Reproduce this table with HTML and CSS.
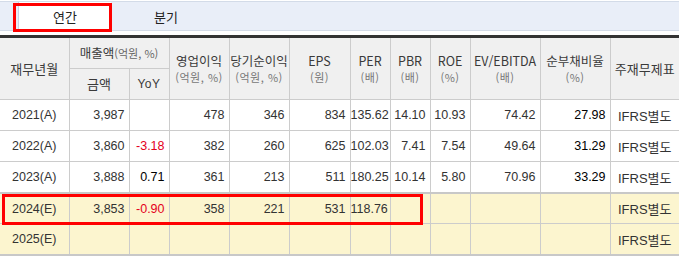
FILE: index.html
```html
<!DOCTYPE html>
<html lang="ko">
<head>
<meta charset="utf-8">
<link rel="stylesheet" href="styles.css">
</head>
<body>
<div class="page">
  <div class="tabs">
    <div class="tab tab-active">연간</div>
    <div class="tab tab-quarter">분기</div>
  </div>
  <table class="fin">
    <colgroup>
      <col style="width:69px"><col style="width:60px"><col style="width:40px"><col style="width:60px"><col style="width:60px"><col style="width:61px"><col style="width:40px"><col style="width:40px"><col style="width:40px"><col style="width:70px"><col style="width:70px"><col style="width:69px">
    </colgroup>
    <thead>
      <tr class="h1">
        <th rowspan="2" class="first">재무년월</th>
        <th colspan="2">매출액<span class="unit-inline">(억원, %)</span></th>
        <th rowspan="2"><span class="ln">영업이익</span><span class="ln unit">(억원, %)</span></th>
        <th rowspan="2"><span class="ln">당기순이익</span><span class="ln unit">(억원, %)</span></th>
        <th rowspan="2"><span class="ln">EPS</span><span class="ln unit">(원)</span></th>
        <th rowspan="2"><span class="ln">PER</span><span class="ln unit">(배)</span></th>
        <th rowspan="2"><span class="ln">PBR</span><span class="ln unit">(배)</span></th>
        <th rowspan="2"><span class="ln">ROE</span><span class="ln unit">(%)</span></th>
        <th rowspan="2"><span class="ln">EV/EBITDA</span><span class="ln unit">(배)</span></th>
        <th rowspan="2"><span class="ln">순부채비율</span><span class="ln unit">(%)</span></th>
        <th rowspan="2" class="last">주재무제표</th>
      </tr>
      <tr class="h2">
        <th>금액</th>
        <th class="yoy">YoY</th>
      </tr>
    </thead>
    <tbody>
      <tr>
        <td class="year">2021(A)</td><td>3,987</td><td></td><td>478</td><td>346</td><td>834</td><td>135.62</td><td>14.10</td><td>10.93</td><td>74.42</td><td class="strong">27.98</td><td class="ifrs">IFRS별도</td>
      </tr>
      <tr>
        <td class="year">2022(A)</td><td>3,860</td><td class="neg">-3.18</td><td>382</td><td>260</td><td>625</td><td>102.03</td><td>7.41</td><td>7.54</td><td>49.64</td><td class="strong">31.29</td><td class="ifrs">IFRS별도</td>
      </tr>
      <tr>
        <td class="year">2023(A)</td><td>3,888</td><td class="strong">0.71</td><td>361</td><td>213</td><td>511</td><td>180.25</td><td>10.14</td><td>5.80</td><td>70.96</td><td class="strong">33.29</td><td class="ifrs">IFRS별도</td>
      </tr>
      <tr class="est est-first">
        <td class="year">2024(E)</td><td>3,853</td><td class="neg">-0.90</td><td>358</td><td>221</td><td>531</td><td>118.76</td><td></td><td></td><td></td><td></td><td class="ifrs">IFRS별도</td>
      </tr>
      <tr class="est est-last">
        <td class="year">2025(E)</td><td></td><td></td><td></td><td></td><td></td><td></td><td></td><td></td><td></td><td></td><td class="ifrs">IFRS별도</td>
      </tr>
    </tbody>
  </table>
  <div class="mark mark-tab"></div>
  <div class="mark mark-row"></div>
</div>
</body>
</html>
```

FILE: styles.css
```css
html, body {
  margin: 0;
  padding: 0;
  background: #fff;
}
body {
  font-family: "Noto Sans CJK KR", "Noto Sans", sans-serif;
  color: #333;
}
.page {
  position: relative;
  width: 679px;
  padding-top: 1px;
}
.tabs {
  display: flex;
  height: 28px;
  background: #e9eef8;
  border-top: 1px solid #d3dbe8;
  border-bottom: 1px solid #d3dbe8;
  padding-left: 18px;
}
.tab {
  display: flex;
  align-items: center;
  justify-content: center;
  font-size: 13px;
  color: #222;
  height: 28px;
}
.tab-active {
  width: 92px;
  background: #fff;
  border-left: 1px solid #c9d4e6;
}
.tab-quarter {
  width: 110px;
}
.fin {
  margin-top: 4px;
  width: 679px;
  border-collapse: collapse;
  table-layout: fixed;
  border-top: 3px solid #333;
  border-bottom: 2px solid #c8c8c8;
}
.fin th, .fin td {
  border: 1px solid #cccccc;
  padding: 0;
  overflow: hidden;
  white-space: nowrap;
}
.fin th {
  background: #f0f0f0;
  font-weight: normal;
  font-size: 12.5px;
  line-height: 16px;
  color: #3a3a3a;
  text-align: center;
}
.fin th .ln {
  display: block;
  line-height: 16px;
}
.fin .first { border-left: none; font-size: 13px; }
.fin .last { border-right: none; font-size: 13px; }
.fin td:first-child { border-left: none; }
.fin td:last-child { border-right: none; }
.h1 { height: 32px; }
.h2 { height: 31px; }
.h2 th { font-size: 13px; }
.h2 th.yoy {
  font-family: "Liberation Sans", sans-serif;
  font-size: 12px;
  letter-spacing: 0.5px;
}
.fin th .unit {
  font-size: 11px;
  color: #777;
  letter-spacing: 0.5px;
}
.unit-inline {
  font-size: 11px;
  color: #666;
}
.fin td {
  height: 30px;
  font-family: "Liberation Sans", "Noto Sans CJK KR", sans-serif;
  font-size: 12.5px;
  text-align: right;
  padding-right: 4px;
  color: #333;
}
.fin td.year {
  text-align: center;
  padding-right: 0;
}
.fin td.ifrs {
  text-align: center;
  padding-right: 0;
  font-size: 13px;
}
.fin td.neg { color: #e4001b; }
.fin td.strong { color: #000; }
.est td { background: #fcf5cf; }
.est-first td { border-top: 2px solid #c8c8c8; height: 29px; }
.mark {
  position: absolute;
  border: 3px solid #f00;
  box-sizing: border-box;
}
.mark-tab {
  left: 13px;
  top: 3px;
  width: 99px;
  height: 29px;
}
.mark-row {
  left: 2px;
  top: 194px;
  width: 421px;
  height: 31px;
}
```
